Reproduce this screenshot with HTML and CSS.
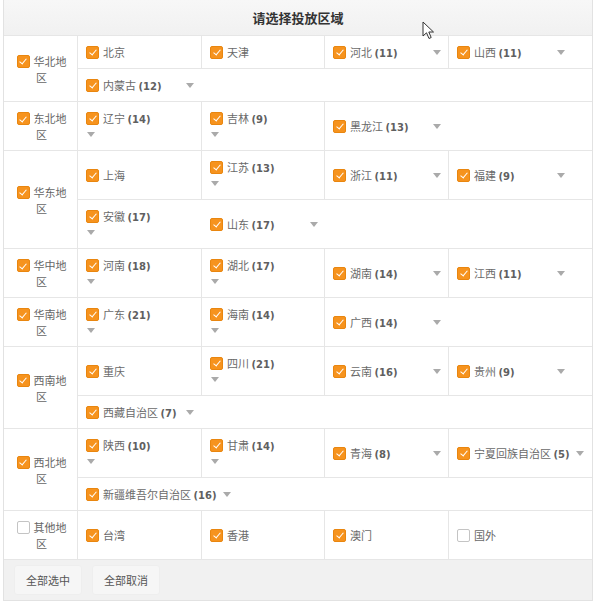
FILE: index.html
```html
<!DOCTYPE html>
<html lang="zh-CN">
<head>
<meta charset="utf-8">
<title>请选择投放区域</title>
<link rel="stylesheet" href="styles.css">
</head>
<body>
<div class="panel">
  <div class="head">请选择投放区域</div>

  <div class="region">
    <div class="rname"><span class="rl"><span class="cb on"></span>华北地区</span></div>
    <div class="subs">
      <div class="sub">
        <div class="cell"><span class="item"><span class="cb on"></span><span class="nm">北京</span></span></div>
        <div class="cell"><span class="item"><span class="cb on"></span><span class="nm">天津</span></span></div>
        <div class="cell"><span class="item"><span class="cb on"></span><span class="nm">河北 <b>(11)</b></span><span class="arrow"></span></span></div>
        <div class="cell"><span class="item"><span class="cb on"></span><span class="nm">山西 <b>(11)</b></span><span class="arrow"></span></span></div>
      </div>
      <div class="sub more">
        <div class="cell"><span class="item"><span class="cb on"></span><span class="nm">内蒙古 <b>(12)</b></span><span class="arrow"></span></span></div>
      </div>
    </div>
  </div>

  <div class="region">
    <div class="rname"><span class="rl"><span class="cb on"></span>东北地区</span></div>
    <div class="subs">
      <div class="sub">
        <div class="cell"><span class="item wrap"><span class="cb on"></span><span class="nm">辽宁 <b>(14)</b></span><span class="arrow"></span></span></div>
        <div class="cell"><span class="item wrap"><span class="cb on"></span><span class="nm">吉林 <b>(9)</b></span><span class="arrow"></span></span></div>
        <div class="cell last"><span class="item"><span class="cb on"></span><span class="nm">黑龙江 <b>(13)</b></span><span class="arrow"></span></span></div>
      </div>
    </div>
  </div>

  <div class="region">
    <div class="rname"><span class="rl"><span class="cb on"></span>华东地区</span></div>
    <div class="subs">
      <div class="sub">
        <div class="cell"><span class="item"><span class="cb on"></span><span class="nm">上海</span></span></div>
        <div class="cell"><span class="item wrap"><span class="cb on"></span><span class="nm">江苏 <b>(13)</b></span><span class="arrow"></span></span></div>
        <div class="cell"><span class="item"><span class="cb on"></span><span class="nm">浙江 <b>(11)</b></span><span class="arrow"></span></span></div>
        <div class="cell"><span class="item"><span class="cb on"></span><span class="nm">福建 <b>(9)</b></span><span class="arrow"></span></span></div>
      </div>
      <div class="sub more">
        <div class="cell"><span class="item wrap"><span class="cb on"></span><span class="nm">安徽 <b>(17)</b></span><span class="arrow"></span></span></div>
        <div class="cell"><span class="item"><span class="cb on"></span><span class="nm">山东 <b>(17)</b></span><span class="arrow"></span></span></div>
      </div>
    </div>
  </div>

  <div class="region">
    <div class="rname"><span class="rl"><span class="cb on"></span>华中地区</span></div>
    <div class="subs">
      <div class="sub">
        <div class="cell"><span class="item wrap"><span class="cb on"></span><span class="nm">河南 <b>(18)</b></span><span class="arrow"></span></span></div>
        <div class="cell"><span class="item wrap"><span class="cb on"></span><span class="nm">湖北 <b>(17)</b></span><span class="arrow"></span></span></div>
        <div class="cell"><span class="item"><span class="cb on"></span><span class="nm">湖南 <b>(14)</b></span><span class="arrow"></span></span></div>
        <div class="cell"><span class="item"><span class="cb on"></span><span class="nm">江西 <b>(11)</b></span><span class="arrow"></span></span></div>
      </div>
    </div>
  </div>

  <div class="region">
    <div class="rname"><span class="rl"><span class="cb on"></span>华南地区</span></div>
    <div class="subs">
      <div class="sub">
        <div class="cell"><span class="item wrap"><span class="cb on"></span><span class="nm">广东 <b>(21)</b></span><span class="arrow"></span></span></div>
        <div class="cell"><span class="item wrap"><span class="cb on"></span><span class="nm">海南 <b>(14)</b></span><span class="arrow"></span></span></div>
        <div class="cell last"><span class="item"><span class="cb on"></span><span class="nm">广西 <b>(14)</b></span><span class="arrow"></span></span></div>
      </div>
    </div>
  </div>

  <div class="region">
    <div class="rname"><span class="rl"><span class="cb on"></span>西南地区</span></div>
    <div class="subs">
      <div class="sub">
        <div class="cell"><span class="item"><span class="cb on"></span><span class="nm">重庆</span></span></div>
        <div class="cell"><span class="item wrap"><span class="cb on"></span><span class="nm">四川 <b>(21)</b></span><span class="arrow"></span></span></div>
        <div class="cell"><span class="item"><span class="cb on"></span><span class="nm">云南 <b>(16)</b></span><span class="arrow"></span></span></div>
        <div class="cell"><span class="item"><span class="cb on"></span><span class="nm">贵州 <b>(9)</b></span><span class="arrow"></span></span></div>
      </div>
      <div class="sub more">
        <div class="cell"><span class="item"><span class="cb on"></span><span class="nm">西藏自治区 <b>(7)</b></span><span class="arrow"></span></span></div>
      </div>
    </div>
  </div>

  <div class="region">
    <div class="rname"><span class="rl"><span class="cb on"></span>西北地区</span></div>
    <div class="subs">
      <div class="sub">
        <div class="cell"><span class="item wrap"><span class="cb on"></span><span class="nm">陕西 <b>(10)</b></span><span class="arrow"></span></span></div>
        <div class="cell"><span class="item wrap"><span class="cb on"></span><span class="nm">甘肃 <b>(14)</b></span><span class="arrow"></span></span></div>
        <div class="cell"><span class="item"><span class="cb on"></span><span class="nm">青海 <b>(8)</b></span><span class="arrow"></span></span></div>
        <div class="cell"><span class="item"><span class="cb on"></span><span class="nm">宁夏回族自治区 <b>(5)</b></span><span class="arrow"></span></span></div>
      </div>
      <div class="sub more">
        <div class="cell"><span class="item"><span class="cb on"></span><span class="nm">新疆维吾尔自治区 <b>(16)</b></span><span class="arrow"></span></span></div>
      </div>
    </div>
  </div>

  <div class="region">
    <div class="rname"><span class="rl"><span class="cb"></span>其他地区</span></div>
    <div class="subs">
      <div class="sub">
        <div class="cell"><span class="item"><span class="cb on"></span><span class="nm">台湾</span></span></div>
        <div class="cell"><span class="item"><span class="cb on"></span><span class="nm">香港</span></span></div>
        <div class="cell"><span class="item"><span class="cb on"></span><span class="nm">澳门</span></span></div>
        <div class="cell"><span class="item"><span class="cb"></span><span class="nm">国外</span></span></div>
      </div>
    </div>
  </div>

  <div class="foot">
    <span class="btn">全部选中</span>
    <span class="btn">全部取消</span>
  </div>

  <svg class="cursor" width="13" height="19" viewBox="0 0 13 19"><path d="M1 1 L1 15 L4.5 11.8 L7 17.5 L9.2 16.5 L6.8 11 L11.5 11 Z" fill="#fff" stroke="#333" stroke-width="1" stroke-linejoin="round"/></svg>
</div>
</body>
</html>
```
FILE: styles.css
```css
html, body {
  margin: 0;
  padding: 0;
  background: #fff;
}
body {
  font-family: "Noto Sans CJK SC", "Noto Sans", sans-serif;
  font-size: 11px;
  line-height: 16px;
  color: #666;
}
.panel {
  position: relative;
  width: 588px;
  margin-left: 3px;
  border: 1px solid #e2e2e2;
  border-top: none;
}
.head {
  height: 35px;
  line-height: 35px;
  text-align: center;
  font-size: 13px;
  font-weight: bold;
  color: #333;
  background: linear-gradient(#f7f7f7, #f1f1f1);
  border-bottom: 1px solid #e6e6e6;
}
.region {
  display: flex;
  border-bottom: 1px solid #e6e6e6;
}
.rname {
  width: 57px;
  flex: none;
  padding: 8px 8px;
  border-right: 1px solid #e6e6e6;
  display: flex;
  align-items: center;
}
.rl {
  display: block;
  width: 100%;
  text-align: center;
  line-height: 16px;
  padding-left: 2px;
}
.rl .cb {
  margin-right: 4px;
  vertical-align: -2px;
}
.subs {
  flex: 1;
  display: flex;
  flex-direction: column;
}
.sub {
  display: grid;
  grid-template-columns: 124px 123px 124px 1fr;
}
.sub:only-child {
  flex: 1;
}
.sub + .sub {
  border-top: 1px solid #e6e6e6;
}
.cell {
  display: flex;
  align-items: center;
  padding: 8px 8px;
  border-right: 1px solid #e6e6e6;
  min-width: 0;
}
.cell:nth-child(4), .cell.last {
  border-right: none;
}
.cell.last {
  grid-column: 3 / 5;
}
.sub.more .cell {
  border-right: none;
}
.item {
  display: flex;
  align-items: center;
  flex: none;
  min-width: 108px;
  height: 16px;
  white-space: nowrap;
}
.nm {
  display: block;
  height: 16px;
  line-height: 16px;
  color: #6a6a6a;
}
.nm b {
  font-family: "DejaVu Sans", "Liberation Sans", sans-serif;
  font-size: 10px;
  line-height: 10px;
  color: #606060;
  font-weight: bold;
}
.cb {
  display: inline-block;
  box-sizing: border-box;
  width: 13px;
  height: 13px;
  margin-right: 4px;
  border: 1px solid #c4c4c4;
  border-radius: 2px;
  background: #fff;
  position: relative;
  flex: none;
}
.cb.on {
  background: #f6931e;
  border-color: #e9860f;
}
.cb.on::after {
  content: "";
  position: absolute;
  left: 3.5px;
  top: 1.5px;
  width: 3px;
  height: 6px;
  border-right: 1.2px solid #fff;
  border-bottom: 1.2px solid #fff;
  transform: rotate(40deg);
}
.arrow {
  width: 0;
  height: 0;
  border-left: 4.5px solid transparent;
  border-right: 4.5px solid transparent;
  border-top: 5px solid #aaa;
  margin-left: auto;
  flex: none;
}
.item:not(.wrap) .nm {
  margin-right: 6px;
}
.item.wrap {
  display: grid;
  grid-template-columns: auto auto;
  justify-content: start;
  align-items: center;
  height: auto;
  min-width: 0;
}
.item.wrap .arrow {
  grid-column: 1 / -1;
  justify-self: start;
  margin: 6px 0 5px 1px;
}
.foot {
  height: 40px;
  background: #f1f1f1;
  display: flex;
  align-items: center;
  gap: 12px;
  padding-left: 11px;
}
.btn {
  display: inline-block;
  height: 28px;
  line-height: 28px;
  padding: 0 11px;
  background: #f6f6f6;
  border-radius: 2px;
  box-shadow: 0 0 2px rgba(0,0,0,0.05);
  color: #555;
}
.cursor {
  position: absolute;
  left: 418px;
  top: 21px;
}
```
